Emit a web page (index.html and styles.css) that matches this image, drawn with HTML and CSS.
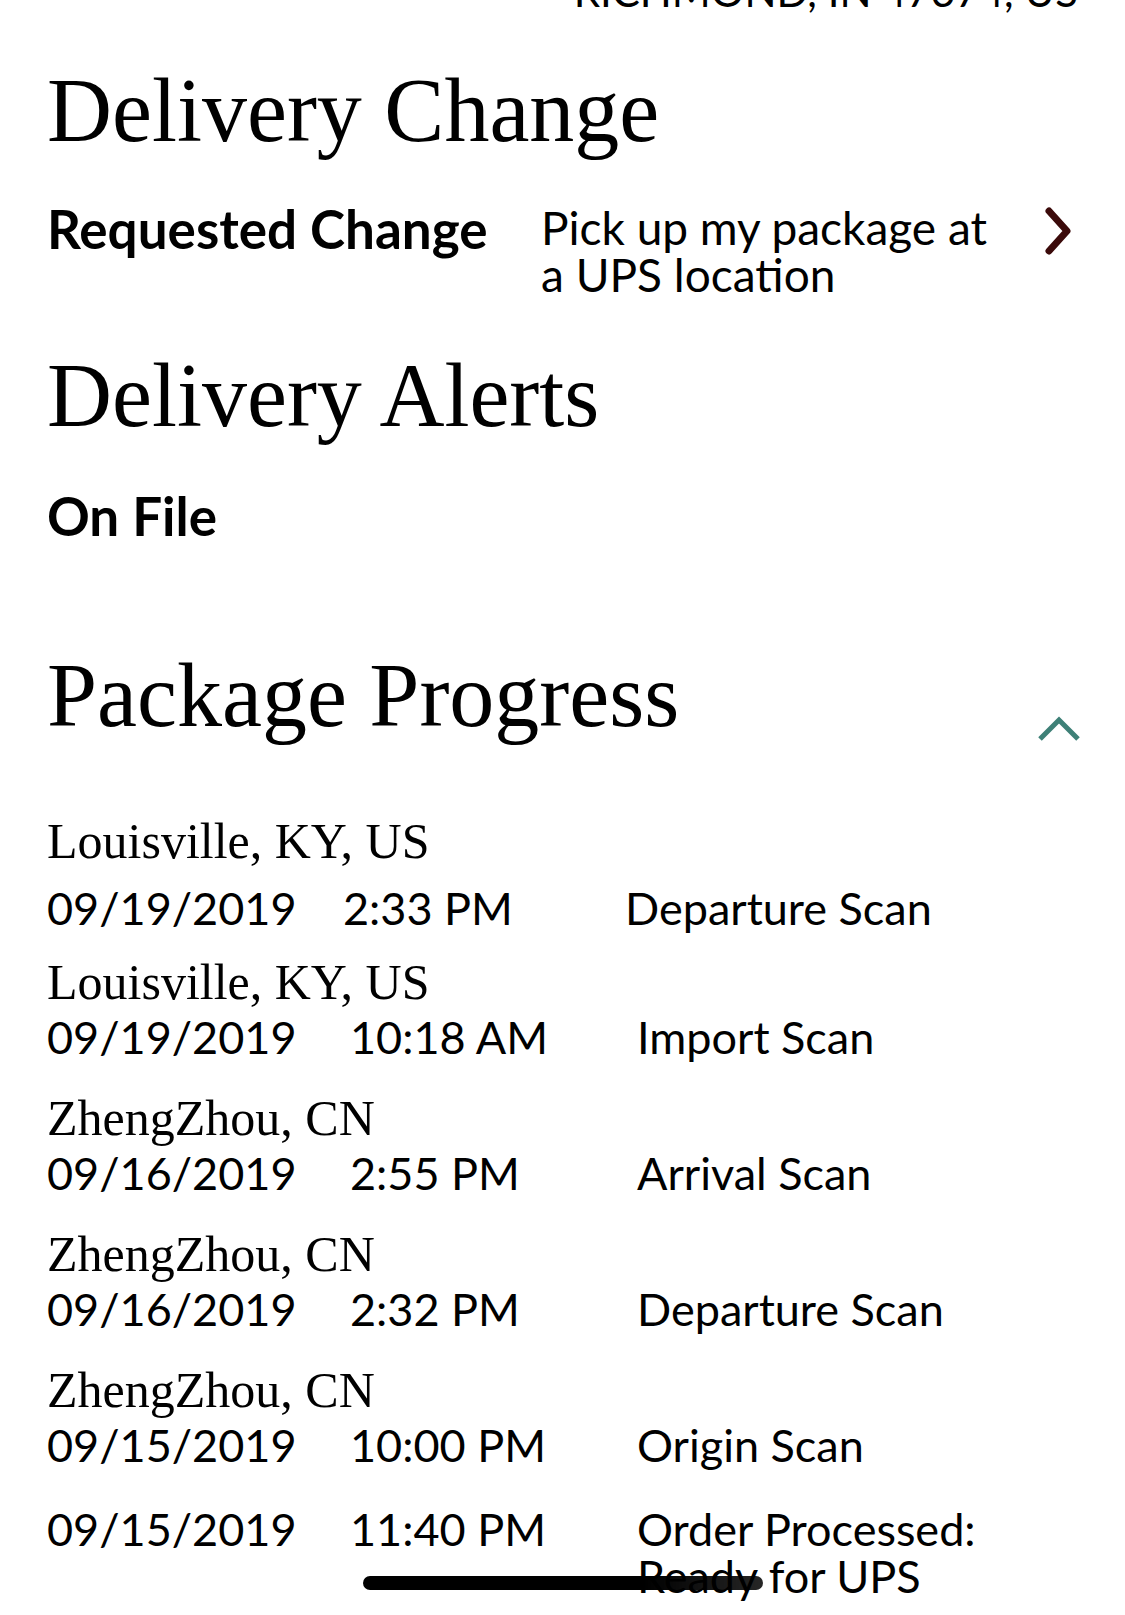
FILE: index.html
```html
<!DOCTYPE html>
<html lang="en">
<head>
    <meta charset="UTF-8">
    <meta name="viewport" content="width=device-width, initial-scale=1.0">
    <title>Tracking Details</title>
    <link rel="stylesheet" href="styles.css">
</head>
<body>
    <main class="page">
        <div class="addr">RICHMOND, IN 47374, US</div>

        <!-- delivery change -->
        <section class="block">
            <h2 class="title">Delivery Change</h2>
            <div class="change-row">
                <span class="label">Requested Change</span>
                <span class="value">Pick up my package at a UPS location</span>
                <svg class="chev-right" width="30" height="48" viewBox="0 0 30 48">
                    <polyline points="6,4 24,24 6,44" fill="none" stroke="#3b0a0a" stroke-width="7" stroke-linecap="round" stroke-linejoin="round"/>
                </svg>
            </div>
        </section>

        <!-- delivery alerts -->
        <section class="block alerts">
            <h2 class="title">Delivery Alerts</h2>
            <p class="label">On File</p>
        </section>

        <!-- package progress -->
        <section class="block progress">
            <div class="title-row">
                <h2 class="title">Package Progress</h2>
                <svg class="chev-up" width="44" height="28" viewBox="0 0 44 28">
                    <polyline points="3,25 22,6 41,25" fill="none" stroke="#3e8077" stroke-width="5"/>
                </svg>
            </div>
            <ul class="activity">
                <li class="act first">
                    <div class="loc">Louisville, KY, US</div>
                    <div class="line"><span>09/19/2019</span><span>2:33 PM</span><span>Departure Scan</span></div>
                </li>
                <li class="act">
                    <div class="loc">Louisville, KY, US</div>
                    <div class="line"><span>09/19/2019</span><span>10:18 AM</span><span>Import Scan</span></div>
                </li>
                <li class="act">
                    <div class="loc">ZhengZhou, CN</div>
                    <div class="line"><span>09/16/2019</span><span>2:55 PM</span><span>Arrival Scan</span></div>
                </li>
                <li class="act">
                    <div class="loc">ZhengZhou, CN</div>
                    <div class="line"><span>09/16/2019</span><span>2:32 PM</span><span>Departure Scan</span></div>
                </li>
                <li class="act">
                    <div class="loc">ZhengZhou, CN</div>
                    <div class="line"><span>09/15/2019</span><span>10:00 PM</span><span>Origin Scan</span></div>
                </li>
                <li class="act no-loc">
                    <div class="line"><span>09/15/2019</span><span>11:40 PM</span><span>Order Processed: Ready for UPS</span></div>
                </li>
            </ul>
        </section>
    </main>
    <div class="home-bar"></div>
</body>
</html>
```
FILE: styles.css
```css
* {
    margin: 0;
    padding: 0;
    box-sizing: border-box;
}

body {
    background-color: #fff;
    color: #000;
    font-family: Lato, "Open Sans", sans-serif;
    height: 1615px;
    overflow: hidden;
}

.page {
    padding: 0 47px;
}

/* address line cut off at the top */
.addr {
    text-align: right;
    font-size: 42px;
    line-height: 42px;
    margin-top: -30px;
}

.title {
    font-family: "Liberation Serif", serif;
    font-weight: normal;
    font-size: 90px;
    line-height: 100px;
}

.block {
    margin-top: 49px;
}

.change-row {
    display: grid;
    grid-template-columns: 494px 1fr 40px;
    align-items: start;
    margin-top: 43px;
}

.label {
    font-weight: bold;
    font-size: 53px;
    line-height: 50px;
}

.value {
    font-size: 46px;
    line-height: 47px;
    max-width: 465px;
}

.chev-right {
    margin-top: 3px;
    margin-right: 5px;
    justify-self: end;
}

.alerts {
    margin-top: 48px;
}

.alerts .label {
    display: block;
    margin-top: 45px;
}

.progress {
    margin-top: 105px;
}

.title-row {
    display: flex;
    justify-content: space-between;
    align-items: flex-end;
}

.chev-up {
    margin-right: -3px;
    margin-bottom: 4px;
}

.activity {
    list-style: none;
    margin-top: 67px;
}

.act {
    margin-bottom: 29px;
}

.loc {
    font-family: "Liberation Serif", serif;
    font-size: 50px;
    line-height: 56px;
}

.line {
    display: grid;
    grid-template-columns: 303px 287px 1fr;
    font-size: 45px;
    line-height: 47px;
    margin-top: 4px;
}

.first {
    margin-bottom: 22px;
}

.first .line {
    grid-template-columns: 296px 282px 1fr;
    margin-top: 16px;
}

.no-loc {
    padding-top: 4px;
}

.home-bar {
    position: fixed;
    left: 363px;
    top: 1576px;
    width: 400px;
    height: 14px;
    border-radius: 7px;
    background: linear-gradient(to right, #000 70%, rgba(0, 0, 0, 0.85));
}
```
